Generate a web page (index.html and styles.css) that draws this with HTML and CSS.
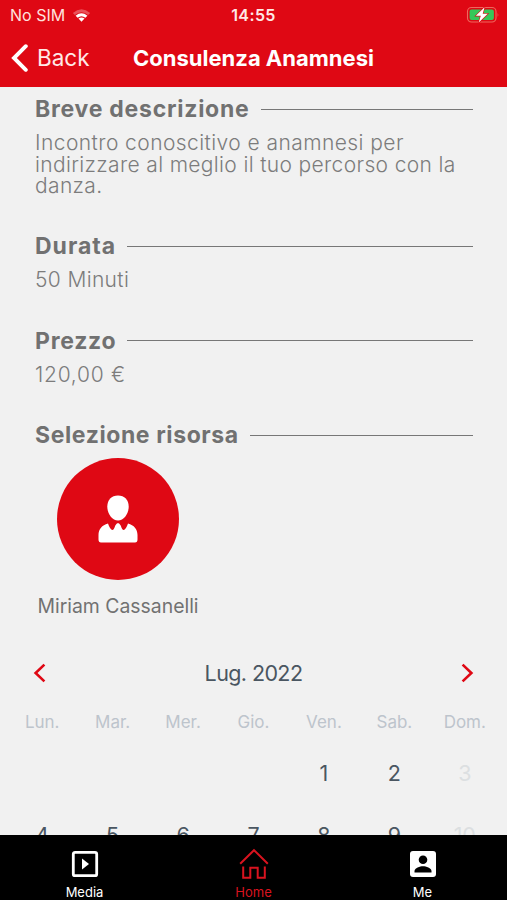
FILE: index.html
```html
<!DOCTYPE html>
<html lang="it">
  <head>
    <meta charset="UTF-8" />
    <meta name="viewport" content="width=device-width, initial-scale=1.0" />
    <title>Consulenza Anamnesi</title>
    <link rel="stylesheet" href="styles.css">
  </head>
  <body>
    <div class="app">
      <header class="header">
        <div class="status-bar">
          <div class="carrier">
            <span>No SIM</span>
            <svg class="wifi" width="19" height="15" viewBox="0 0 18 14">
              <path d="M0.8 4.6 Q9 -2.4 17.2 4.6 L15.3 6.5 Q9 1.3 2.7 6.5 Z" fill="#fff" opacity="0.3" />
              <path d="M3.4 7.2 Q9 2.5 14.6 7.2 L12.7 9.1 Q9 6.2 5.3 9.1 Z" fill="#fff" />
              <path d="M6.1 9.9 Q9 7.7 11.9 9.9 L9 12.9 Z" fill="#fff" />
            </svg>
          </div>
          <span class="clock">14:55</span>
          <svg class="battery" width="34" height="18" viewBox="0 0 34 18">
            <rect x="1.5" y="1.5" width="28.5" height="14.5" rx="4" fill="none" stroke="#f0675d" stroke-width="1.1" />
            <path d="M31.6 6.6 Q33 8.8 31.6 11 Z" fill="#f0675d" />
            <rect x="3.6" y="3.6" width="24.3" height="10.4" rx="2" fill="#35c759" />
            <path d="M18.6 1.2 L9.8 9.8 H14.8 L12.7 16.6 L21.8 7.8 H16.7 Z" fill="#fff" stroke="#df0814" stroke-width="1.2" paint-order="stroke" />
          </svg>
        </div>
        <nav class="nav-bar">
          <a class="back">
            <svg width="18" height="28" viewBox="0 0 18 28">
              <path d="M15.8 2.2 L4 14 L15.8 25.8" fill="none" stroke="#fff" stroke-width="3.9" stroke-linecap="round" />
            </svg>
            <span>Back</span>
          </a>
          <h1>Consulenza Anamnesi</h1>
        </nav>
      </header>

      <main class="content">
        <section class="section description">
          <h2>Breve descrizione</h2>
          <p>
            <span class="line">Incontro conoscitivo e anamnesi per</span>
            <span class="line">indirizzare al meglio il tuo percorso con la</span>
            <span class="line">danza.</span>
          </p>
        </section>

        <section class="section">
          <h2 class="short">Durata</h2>
          <p class="duration">50 Minuti</p>
        </section>

        <section class="section">
          <h2>Prezzo</h2>
          <p class="price">120,00 €</p>
        </section>

        <section class="section resources">
          <h2 class="long">Selezione risorsa</h2>
          <div class="resource">
            <div class="avatar">
              <svg width="40" height="48" viewBox="0 0 40 48">
                <path d="M20 0.5 C26.5 0.5 30.7 5 30.7 11.5 C30.7 18.5 26 25.6 20 25.6 C14 25.6 9.3 18.5 9.3 11.5 C9.3 5 13.5 0.5 20 0.5 Z" fill="#fff" />
                <path d="M10 28.6 Q12.2 35 14.4 35 Q15.8 35 17.3 30.5 Q18.6 28 20 28 Q21.4 28 22.7 30.5 Q24.2 35 25.6 35 Q27.8 35 30 28.6 C36 30.2 39.5 34.5 39.5 40 V44.5 Q39.5 47.5 37 47.5 H3 Q0.5 47.5 0.5 44.5 V40 C0.5 34.5 4 30.2 10 28.6 Z" fill="#fff" />
              </svg>
            </div>
            <span class="resource-name">Miriam Cassanelli</span>
          </div>
        </section>

        <section class="calendar">
          <div class="month">
            <svg width="14" height="20" viewBox="0 0 14 20">
              <path d="M11.4 1.6 L2.6 10 L11.4 18.4" fill="none" stroke="#df0814" stroke-width="2.6" />
            </svg>
            <span>Lug. 2022</span>
            <svg width="14" height="20" viewBox="0 0 14 20">
              <path d="M2.6 1.6 L11.4 10 L2.6 18.4" fill="none" stroke="#df0814" stroke-width="2.6" />
            </svg>
          </div>
          <div class="week weekdays">
            <span>Lun.</span>
            <span>Mar.</span>
            <span>Mer.</span>
            <span>Gio.</span>
            <span>Ven.</span>
            <span>Sab.</span>
            <span>Dom.</span>
          </div>
          <div class="week days">
            <span></span>
            <span></span>
            <span></span>
            <span></span>
            <span>1</span>
            <span>2</span>
            <span class="disabled">3</span>
            <span>4</span>
            <span>5</span>
            <span>6</span>
            <span>7</span>
            <span>8</span>
            <span>9</span>
            <span class="disabled">10</span>
          </div>
        </section>
      </main>

      <footer class="tab-bar">
        <a class="tab">
          <svg width="30" height="32" viewBox="0 0 30 32">
            <rect x="3.3" y="4.3" width="23.4" height="23.4" rx="1.8" fill="none" stroke="#fff" stroke-width="2.8" />
            <path d="M12 10.5 L19 16 L12 21.5 Z" fill="#fff" />
          </svg>
          <span>Media</span>
        </a>
        <a class="tab active">
          <svg width="30" height="32" viewBox="0 0 30 32">
            <path d="M1.2 15.8 L15 2.2 L28.8 15.8" fill="none" stroke="#d9131f" stroke-width="2" />
            <path d="M4.2 18.5 V29.8 H11.3 V19.8 H18.7 V29.8 H25.8 V18.5" fill="none" stroke="#d9131f" stroke-width="2" />
          </svg>
          <span>Home</span>
        </a>
        <a class="tab">
          <svg width="30" height="32" viewBox="0 0 30 32">
            <rect x="2" y="3" width="26" height="26" rx="3" fill="#fff" />
            <circle cx="15" cy="11.7" r="4.3" fill="#000" />
            <path d="M6.5 24.5 V23 C6.5 20 12 18.3 15 18.3 C18 18.3 23.5 20 23.5 23 V24.5 Z" fill="#000" />
          </svg>
          <span>Me</span>
        </a>
      </footer>
    </div>
  </body>
</html>
```
FILE: styles.css
```css
* {
  margin: 0;
  padding: 0;
  box-sizing: border-box;
}

body {
  font-family: Inter, "Liberation Sans", sans-serif;
  background: #f1f1f1;
  color: #717171;
}

.app {
  display: flex;
  flex-direction: column;
  width: 507px;
  height: 900px;
  overflow: hidden;
}

/* Header */
.header {
  height: 87px;
  flex-shrink: 0;
  background: #df0814;
  color: white;
}

.status-bar {
  display: grid;
  grid-template-columns: 1fr auto 1fr;
  align-items: center;
  height: 30px;
  padding: 0 7px 0 10px;
  font-size: 16px;
}

.carrier {
  display: flex;
  align-items: center;
  gap: 7px;
  color: #ffe1de;
}

.clock {
  margin-right: 3px;
  font-weight: 600;
  color: #ffe9e6;
  letter-spacing: 0.4px;
}

.battery {
  justify-self: end;
}

.nav-bar {
  display: grid;
  grid-template-columns: 1fr auto 1fr;
  align-items: center;
  height: 55px;
  padding: 0 10px;
}

.back {
  display: flex;
  align-items: center;
  gap: 9px;
  font-size: 22.5px;
  color: #ffe9e6;
}

h1 {
  font-size: 22px;
  font-weight: 700;
  white-space: nowrap;
}

/* Content */
.content {
  flex: 1;
  min-height: 0;
  overflow: hidden;
  padding-top: 8px;
}

.section {
  height: 94.5px;
  padding: 0 34px 0 35px;
}

.description {
  height: 137px;
}

.resources {
  height: 228px;
}

h2 {
  display: flex;
  align-items: center;
  gap: 11px;
  height: 28px;
  font-size: 23px;
  font-weight: 700;
  letter-spacing: 0.75px;
  white-space: nowrap;
}

h2.short {
  letter-spacing: 1px;
}

h2.long {
  letter-spacing: 0.6px;
}

h2::after {
  content: "";
  flex: 1;
  height: 1px;
  background: #777;
}

.section p {
  margin-top: 9px;
  font-size: 21px;
  font-weight: 300;
  line-height: 21.5px;
  letter-spacing: 0.35px;
  color: #7c7c7c;
  white-space: nowrap;
}

.line {
  display: block;
}

.line:first-child {
  letter-spacing: 0.43px;
}

.section .price {
  letter-spacing: 0.75px;
}

.resource {
  display: flex;
  flex-direction: column;
  align-items: center;
  width: 166px;
  margin-top: 9px;
}

.avatar {
  display: flex;
  align-items: center;
  justify-content: center;
  width: 122px;
  height: 122px;
  border-radius: 50%;
  background: #df0814;
}

.resource-name {
  margin-top: 14px;
  font-size: 19.4px;
  line-height: 24px;
  white-space: nowrap;
}

/* Calendar */
.calendar {
  padding: 0 7px;
}

.month {
  display: flex;
  align-items: center;
  justify-content: space-between;
  height: 48px;
  padding: 0 26px;
  font-size: 21.5px;
  letter-spacing: -0.6px;
  color: #4a5661;
}

.week {
  display: grid;
  grid-template-columns: repeat(7, 1fr);
  text-align: center;
}

.weekdays {
  height: 50px;
  line-height: 50px;
  font-size: 17px;
  color: #bdc4cc;
}

.days {
  grid-auto-rows: 62px;
  line-height: 52px;
  font-size: 21.5px;
  color: #4a5661;
}

.disabled {
  color: #dcdfe1;
}

/* Tab bar */
.tab-bar {
  display: grid;
  grid-template-columns: repeat(3, 1fr);
  flex-shrink: 0;
  height: 65px;
  padding-top: 13px;
  background: #000;
}

.tab {
  display: flex;
  flex-direction: column;
  align-items: center;
  gap: 4px;
  font-size: 13px;
  line-height: 16px;
  color: #fff;
}

.tab.active {
  color: #d9131f;
}
```
